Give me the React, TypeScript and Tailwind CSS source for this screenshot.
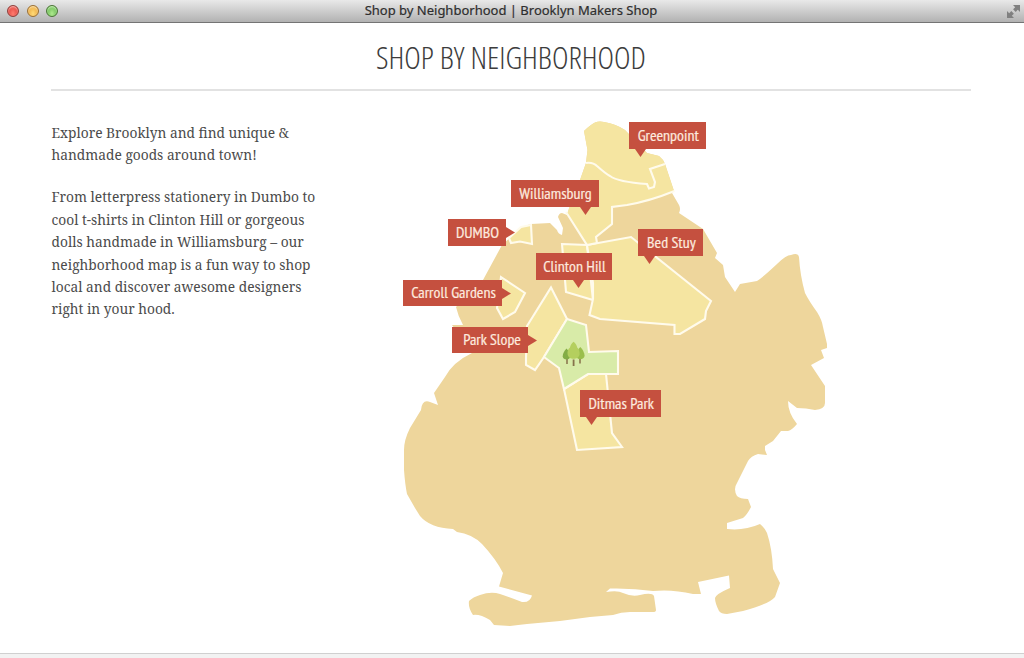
const land = '#eed69c';
const hood = '#f5e5a1';
const edge = '#fffbec';

const labels = [
  { name: 'Greenpoint', box: 'left-[239px] top-[11.7px] w-[77px] h-[27px]', tip: 'down', at: 'left-[6px]' },
  { name: 'Williamsburg', box: 'left-[121px] top-[70px] w-[87.5px] h-[27px]', tip: 'down', at: 'left-[69px]' },
  { name: 'DUMBO', box: 'left-[57.5px] top-[109px] w-[58.5px] h-[27px]', tip: 'right', at: '' },
  { name: 'Bed Stuy', box: 'left-[248.3px] top-[119px] w-[64.7px] h-[27px]', tip: 'down', at: 'left-[6px]' },
  { name: 'Clinton Hill', box: 'left-[145.5px] top-[143px] w-[76.5px] h-[27px]', tip: 'down', at: 'left-[37px]' },
  { name: 'Carroll Gardens', box: 'left-[13.3px] top-[169.7px] w-[99px] h-[26.3px]', tip: 'right', at: '' },
  { name: 'Park Slope', box: 'left-[62.3px] top-[216.7px] w-[76px] h-[26.3px]', tip: 'right', at: '' },
  { name: 'Ditmas Park', box: 'left-[190px] top-[280px] w-[81px] h-[27px]', tip: 'down', at: 'left-[6px]' },
];

function TitleBar() {
  return (
    <header className="grid h-[23px] shrink-0 grid-cols-[80px_1fr_80px] items-center border-b border-[#747474] bg-linear-to-b from-[#e9e9e9] to-[#b2b2b2]">
      <div className="flex items-center gap-[7.5px] pb-[2px] pl-[7px]">
        <span className="size-3 rounded-full border border-[#8f3f3b] bg-radial-[at_50%_75%] from-[#ff7d70] to-[#d8302c] shadow-[inset_0_1px_2px_#ffc4be]" />
        <span className="size-3 rounded-full border border-[#9a7035] bg-radial-[at_50%_75%] from-[#ffdb78] to-[#e5992c] shadow-[inset_0_1px_2px_#ffedc0]" />
        <span className="size-3 rounded-full border border-[#4a7536] bg-radial-[at_50%_75%] from-[#aeea8e] to-[#55a942] shadow-[inset_0_1px_2px_#d8fac8]" />
      </div>
      <h1 className="pr-[2px] pb-[3px] text-center font-['Noto_Sans','Open_Sans',sans-serif] text-[13px] leading-5 text-[#2e2e2e] [-webkit-text-stroke:0.2px_#2e2e2e]">
        Shop by Neighborhood | Brooklyn Makers Shop
      </h1>
      <svg className="mr-[3px] mb-px size-[15px] justify-self-end" viewBox="0 0 15 15" fill="#808080">
        <path d="M7 1H14V8L11.8 5.8L9.7 7.9L7.1 5.3L9.2 3.2Z" />
        <path d="M8 14H1V7L3.2 9.2L5.3 7.1L7.9 9.7L5.8 11.8Z" />
      </svg>
    </header>
  );
}

function Trees() {
  return (
    <g>
      <path d="M567 357V364M580 357V363.5" stroke="#87724a" strokeWidth="1.5" />
      <path d="M566.5 348.5C564.5 350.5 562.6 353.5 562.7 356.5C563 360.5 570 360.5 570.3 356.5C570.3 353.5 568.5 350.5 566.5 348.5Z" fill="#83ad45" />
      <path d="M580.3 347C578 349 576.3 353 576.4 356C576.6 360.3 584.3 360.3 584.6 355.8C584.6 353 582.5 349 580.3 347Z" fill="#9bbe4c" />
      <path d="M573.6 341.7C571.5 343.3 570.3 345.5 570 347.5C568 349 567.2 351.5 567.6 354.2C568.3 360.3 578.9 360.3 579.6 354.2C579.8 351.5 578.8 349 577.2 347.5C576.9 345.5 575.6 343.3 573.6 341.7Z" fill="#b4cf5e" />
      <path d="M573.6 359.5V366" stroke="#87724a" strokeWidth="1.8" />
    </g>
  );
}

function BoroughMap() {
  return (
    <svg className="block h-[530px] w-[450px]" viewBox="390 110 450 530">
      <path
        fill={land}
        d="M584 131Q590 125 595 122.5Q599 121 604 122Q616 124 625 130L647 153L659 156Q663 159 665 164L674 191L672 193L679 205Q681 209 679 213L703 229L717 253L715 258L723 265L725 277L735 292L740 284L757 281Q762 278 777 264Q786 255 791 255Q798 252 799 257Q800 275 805 293Q809 301 817 312Q822 320 823 327L827 344V348L821 350L824 358L811 365L825 386V403Q825 409 815 410Q806 408 797 408L788 401Q788 413 797 424Q792 430 788 431L781 431L773 441L765 446V450L767 455L758 454Q751 456 748 461L737 483Q733 489 737 496Q740 499 748 499L751 507Q747 515 743 518L727 523V529Q744 531 760 524Q765 528 767 533Q772 548 773 569L780 583L775 597Q769 604 743 611L727 614Q721 614 719 611Q715 603 715 598Q716 594 730 588L729 575.5L698 582L701 594H693Q672 589 653 591Q633 588 610 588.5L606 592Q618 590 623 593Q632 597 640 595Q652 592 654 596L656 610Q656 612 653 612H630Q621 612 613 615L590 617L560 621L527 624Q518 625 510 626L494 625L490 620Q480 614 473 615Q468 608 469 601Q473 597 480 595Q491 591 500 594Q512 598 522 602Q530 603 532 595.5L499 586.5L503 573Q496 559 482 544Q472 534 457 532L453 529Q430 528 420 516L415 508L407 494Q405 484 404 470V450Q404 440 410 428L421 410Q422 399 430 402L438 405L434 393L445 377Q453 362 472 353L452 325L463 325Q458 316 456 307L483 280L502 245L513 235L521 227L531 224L550 223L557 230Q558 234 562 235L563 228L558 217Q559 213 562 213L567 215Q571 202 580 180L586 163L587.5 150Z"
      />
      <g fill={hood} stroke={edge} strokeWidth="2.1" strokeLinejoin="miter">
        <path d="M509 238L511 243L520 241.5L532 244L531 225L521 227Z" />
        <path d="M501 277L525 293L515 312L503 319L497 308Z" />
        <path d="M551 287.5L567 319L544 357L535 370L526 365V358L527 326Z" />
        <path d="M562 244L587 245L593 300L566 292Z" />
        <path d="M587 245L631 237L711 301L706 311L705 319L680 334H674.5V325L600 319L589.5 315L593 299V283Z" />
        <path d="M564 389L588 374H606L612 433L622 447L577 450Z" />
      </g>
      <path
        fill={hood}
        d="M584 131Q590 125 595 122.5Q599 121 604 122Q616 124 625 130L647 153L659 156Q663 159 665 164L674 191Q650 201 627 205L612 207V224L596 237L597 243L587 245L567 214Q571 202 580 180L586 163L587.5 150Z"
      />
      <g fill="none" stroke={edge} strokeWidth="2.1">
        <path d="M674.5 191Q650 201 627 205L612 207V224L596 237L597 243L587 245L566 212" />
        <path d="M586 163Q593 162 597 166Q606 174 610 176Q618 182 647 184L649 188.5L654 187L655 182L650 169L665 164" />
      </g>
      <path
        fill="#d8eba8"
        stroke={edge}
        strokeWidth="2.1"
        d="M567 319L586 325L589 352L618 351V374H588L564 389L559 368L544 357Z"
      />
      <Trees />
    </svg>
  );
}

export default function App() {
  return (
    <div className="flex h-[658px] flex-col overflow-hidden bg-white">
      <TitleBar />
      <main className="ml-[51px] flex w-[920px] grow flex-col">
        <h2 className="border-b-2 border-[#e2e2e2] pt-[11px] pb-[10px] text-center font-['Open_Sans',sans-serif] text-[31.4px] leading-[45px] font-light font-stretch-condensed text-[#3c3c3c]">
          SHOP BY NEIGHBORHOOD
        </h2>
        <div className="flex pt-[19px]">
          <section className="flex w-[339px] shrink-0 flex-col gap-[19.6px] pt-3 pr-[66px] pl-[0.5px] font-['Noto_Serif','DejaVu_Serif_Condensed',serif] text-[13.75px] leading-[22.4px] text-[#4b4b4b]">
            <p>
              Explore Brooklyn and find unique &amp;
              <br />
              handmade goods around town!
            </p>
            <p>
              From letterpress stationery in Dumbo to
              <br />
              cool t-shirts in Clinton Hill or gorgeous
              <br />
              dolls handmade in Williamsburg – our
              <br />
              neighborhood map is a fun way to shop
              <br />
              local and discover awesome designers
              <br />
              right in your hood.
            </p>
          </section>
          <div className="relative">
            <BoroughMap />
            {labels.map((l) => (
              <a
                key={l.name}
                className={`absolute flex items-center justify-center bg-[#c5503f] pb-px pl-[1.5px] font-['PT_Sans_Narrow','Open_Sans',sans-serif] text-[16px] leading-5 whitespace-nowrap text-[#fdeadf] [-webkit-text-stroke:0.2px_#fdeadf] ${l.box}`}
              >
                {l.name === 'Park Slope' ? <span className="pl-[2px]">{l.name}</span> : l.name}
                {l.tip === 'down' ? (
                  <svg className={`absolute top-full h-2 w-[11px] ${l.at}`} viewBox="0 0 11 8" fill="#c5503f">
                    <path d="M0 0H11L5.5 8Z" />
                  </svg>
                ) : (
                  <svg className="absolute top-2 left-full h-[11px] w-[9px]" viewBox="0 0 9 11" fill="#c5503f">
                    <path d="M0 0V11L9 5.5Z" />
                  </svg>
                )}
              </a>
            ))}
          </div>
        </div>
      </main>
      <footer className="h-[5px] shrink-0 border-t border-[#d0d0d0] bg-[#f2f2f2]" />
    </div>
  );
}
